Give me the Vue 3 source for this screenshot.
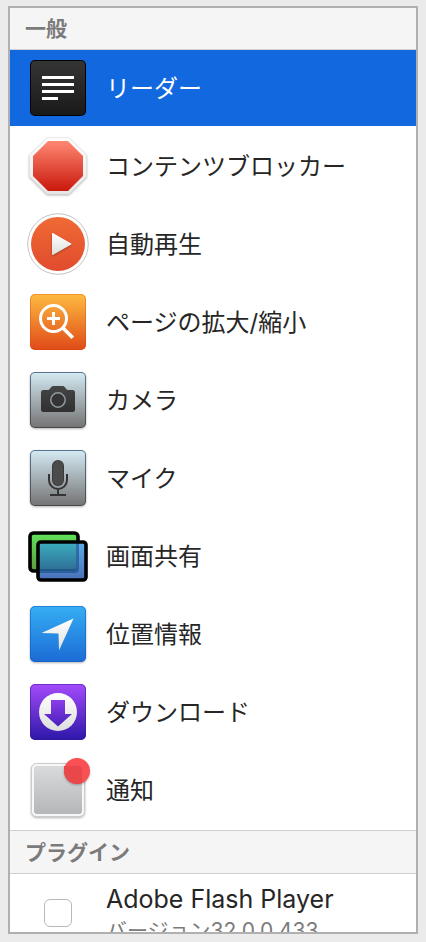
<template>
  <main class="preferences">
    <div class="site-list">
      <section>
        <h2 class="group-title">一般</h2>
        <ul class="items">
          <li v-for="item in items" :key="item.id">
            <button
              type="button"
              class="item"
              :class="{ selected: item.id === selected }"
              @click="selected = item.id"
            >
              <svg v-if="item.id === 'reader'" class="icon" viewBox="0 0 64 64" aria-hidden="true">
                <rect x="4" y="4" width="56" height="56" rx="5" fill="#000" />
                <rect x="5" y="5" width="54" height="54" rx="4" fill="url(#g-reader)" />
                <path d="M16 21.5h32M16 28.5h32M16 35.5h32M16 42.5h16" stroke="#fff" stroke-width="3" />
              </svg>

              <svg v-else-if="item.id === 'blocker'" class="icon" viewBox="0 0 64 64" aria-hidden="true">
                <path
                  class="shadow"
                  d="M21.5 4H43l17.5 17v21.5L43 60H21L3.5 42.5V21z"
                  fill="url(#g-rim)"
                  stroke="#e2e2e2"
                  stroke-width=".6"
                />
                <path d="M22 7h20l15 15v20L42 57H22L7 42V22z" fill="url(#g-red)" />
              </svg>

              <svg v-else-if="item.id === 'autoplay'" class="icon" viewBox="0 0 64 64" aria-hidden="true">
                <circle cx="32" cy="32" r="30.3" fill="#fff" stroke="#c4c4c4" />
                <circle cx="32" cy="32" r="27" fill="url(#g-play)" />
                <path class="shadow" d="M26 21.5v21a.5.5 0 0 0 .8.4l18.4-10.4a.5.5 0 0 0 0-.9L26.8 21a.5.5 0 0 0-.8.5z" fill="url(#g-white)" />
              </svg>

              <svg v-else-if="item.id === 'zoom'" class="icon" viewBox="0 0 64 64" aria-hidden="true">
                <rect x="4" y="4" width="56" height="56" rx="5" fill="url(#g-orange)" />
                <rect x="4.5" y="4.5" width="55" height="55" rx="4.5" fill="none" stroke="#d03a08" stroke-opacity=".3" />
                <circle cx="27.5" cy="28.5" r="13" fill="none" stroke="#fff" stroke-width="3" />
                <path d="M21 28.5h13M27.5 22v13" stroke="#fff" stroke-width="3" />
                <path d="M37 38l9.8 9.8" stroke="#fff" stroke-width="3.6" />
              </svg>

              <svg v-else-if="item.id === 'camera'" class="icon" viewBox="0 0 64 64" aria-hidden="true">
                <rect class="shadow" x="4" y="4" width="56" height="56" rx="5" fill="url(#g-edge)" />
                <rect x="5" y="5" width="54" height="54" rx="4" fill="url(#g-grey)" />
                <path
                  d="M17.5 22H22c2 0 3-4 5-4h10c2 0 3 4 5 4h4.5a2.5 2.5 0 0 1 2.5 2.5v17a2.5 2.5 0 0 1-2.5 2.5h-29a2.5 2.5 0 0 1-2.5-2.5v-17a2.5 2.5 0 0 1 2.5-2.5z"
                  fill="url(#g-dark)"
                />
                <circle cx="32" cy="32" r="7.2" fill="#343434" stroke="#909ba1" stroke-width="1.5" />
              </svg>

              <svg v-else-if="item.id === 'mic'" class="icon" viewBox="0 0 64 64" aria-hidden="true">
                <rect class="shadow" x="4" y="4" width="56" height="56" rx="5" fill="url(#g-edge)" />
                <rect x="5" y="5" width="54" height="54" rx="4" fill="url(#g-grey)" />
                <rect x="26" y="14" width="12" height="26" rx="6" fill="#3a3a3a" />
                <rect x="27" y="15" width="10" height="24" rx="5" fill="#4b4b4b" />
                <path d="M23 28v6a9 9 0 0 0 18 0v-6M32 43v6M24 49h16" fill="none" stroke="#343434" stroke-width="2" />
              </svg>

              <svg v-else-if="item.id === 'share'" class="icon" viewBox="0 0 64 64" aria-hidden="true">
                <rect x="4" y="9" width="48" height="38" rx="3.5" fill="url(#g-green)" stroke="#000" stroke-width="3.6" />
                <rect x="12" y="18" width="48" height="38" rx="3" fill="url(#g-screen)" />
                <path d="M12 18h38v27a2 2 0 0 1-2 2H12z" fill="url(#g-teal)" />
                <path d="M50 18h3v27a4 4 0 0 1-4 4H12v-4h36a2 2 0 0 0 2-2z" fill="#164b85" fill-opacity=".6" />
                <rect x="12" y="18" width="48" height="38" rx="3" fill="none" stroke="#000" stroke-width="3.6" />
              </svg>

              <svg v-else-if="item.id === 'location'" class="icon" viewBox="0 0 64 64" aria-hidden="true">
                <rect class="shadow" x="4" y="4" width="56" height="56" rx="5" fill="url(#g-blue)" />
                <rect x="4.5" y="4.5" width="55" height="55" rx="4.5" fill="none" stroke="#0e59b5" stroke-opacity=".5" />
                <path d="M47.5 16.5L15.5 31l17 .5.5 17z" fill="url(#g-white)" />
              </svg>

              <svg v-else-if="item.id === 'download'" class="icon" viewBox="0 0 64 64" aria-hidden="true">
                <rect x="4" y="4" width="56" height="56" rx="5" fill="url(#g-purple)" />
                <rect x="4.5" y="4.5" width="55" height="55" rx="4.5" fill="none" stroke="#391494" stroke-opacity=".5" />
                <circle cx="32" cy="32" r="19" fill="url(#g-white)" />
                <path d="M25 20h14v14h7L32 46.5 18 34h7z" fill="url(#g-arrow)" />
              </svg>

              <svg v-else class="icon" viewBox="0 0 64 64" aria-hidden="true">
                <rect class="shadow" x="5.5" y="5.5" width="53" height="53" rx="5" fill="#f7f7f7" stroke="#ccc" />
                <rect x="8" y="8" width="48" height="48" rx="3" fill="url(#g-tile)" />
                <circle class="shadow" cx="51" cy="13" r="13" fill="#fa5053" />
                <path d="M38 13V8h15a3 3 0 0 1 3 3v14a13 13 0 0 1-18-12z" fill="#e9484a" />
              </svg>

              <span class="item-label">{{ item.label }}</span>
            </button>
          </li>
        </ul>
      </section>

      <section>
        <h2 class="group-title plugins">プラグイン</h2>
        <div class="plugin">
          <input id="flash" v-model="flashEnabled" type="checkbox" class="check" />
          <label for="flash" class="plugin-text">
            <span class="plugin-name">Adobe Flash Player</span>
            <span class="plugin-version">バージョン32.0.0.433</span>
          </label>
        </div>
      </section>
    </div>

    <svg class="defs" aria-hidden="true">
      <defs>
        <linearGradient v-for="g in gradients" :id="'g-' + g.id" :key="g.id" x1="0" y1="0" x2="0" y2="1">
          <stop offset="0" :stop-color="g.from" />
          <stop offset="1" :stop-color="g.to" />
        </linearGradient>
      </defs>
    </svg>
  </main>
</template>

<script setup>
import { ref } from 'vue';

const selected = ref('reader');
const flashEnabled = ref(false);

const items = [
  { id: 'reader', label: 'リーダー' },
  { id: 'blocker', label: 'コンテンツブロッカー' },
  { id: 'autoplay', label: '自動再生' },
  { id: 'zoom', label: 'ページの拡大/縮小' },
  { id: 'camera', label: 'カメラ' },
  { id: 'mic', label: 'マイク' },
  { id: 'share', label: '画面共有' },
  { id: 'location', label: '位置情報' },
  { id: 'download', label: 'ダウンロード' },
  { id: 'notify', label: '通知' }
];

const gradients = [
  { id: 'reader', from: '#343434', to: '#191919' },
  { id: 'rim', from: '#ffffff', to: '#e6e6e6' },
  { id: 'red', from: '#ff8973', to: '#c9180c' },
  { id: 'play', from: '#f06a35', to: '#e04c2d' },
  { id: 'white', from: '#ffffff', to: '#dedede' },
  { id: 'orange', from: '#fdbb40', to: '#e04a18' },
  { id: 'edge', from: '#5b7590', to: '#484848' },
  { id: 'grey', from: '#d3e8f1', to: '#757575' },
  { id: 'dark', from: '#454545', to: '#303030' },
  { id: 'green', from: '#5fe35a', to: '#5c9a3c' },
  { id: 'screen', from: '#5aaee8', to: '#4a70b8' },
  { id: 'teal', from: '#3cafc0', to: '#2d6c94' },
  { id: 'blue', from: '#36aef4', to: '#1b6bd5' },
  { id: 'purple', from: '#a44bfb', to: '#2d17a8' },
  { id: 'arrow', from: '#8a3de8', to: '#4a20be' },
  { id: 'tile', from: '#d9dadb', to: '#b4b6b8' }
];
</script>

<style>
body {
  background: #ebebeb;
}
</style>

<style scoped>
.preferences {
  box-sizing: border-box;
  height: 100vh;
  padding: 6px 8px 8px;
  font-family: Inter, "Noto Sans CJK JP", sans-serif;
  color: #262626;
}

.site-list {
  box-sizing: border-box;
  height: 100%;
  border: 2px solid #b0b0b0;
  background: #fff;
  overflow: hidden;
}

.group-title {
  box-sizing: border-box;
  height: 42px;
  margin: 0;
  padding-left: 15px;
  border-bottom: 1px solid #d0d0d0;
  background: #f5f5f5;
  color: #7b7b7b;
  font-size: 21px;
  font-weight: 700;
  line-height: 42px;
}

.group-title.plugins {
  height: 44px;
  border-top: 1px solid #d0d0d0;
  line-height: 44px;
}

.items {
  display: flex;
  flex-direction: column;
  gap: 2px;
  margin: 0;
  padding: 0 0 2px;
  list-style: none;
}

.item {
  display: flex;
  align-items: center;
  gap: 16px;
  width: 100%;
  height: 76px;
  padding: 0 16px;
  border: none;
  background: none;
  color: inherit;
  font: inherit;
  font-size: 24px;
  line-height: 36px;
  text-align: left;
}

.item.selected {
  background: #1168df;
  color: #fff;
}

.item-label {
  padding-top: 2px;
}

.icon {
  flex: none;
  width: 64px;
  height: 64px;
  overflow: visible;
}

.shadow {
  filter: drop-shadow(0 1px 1px rgba(0, 0, 0, 0.3));
}

.plugin {
  display: flex;
  align-items: center;
  gap: 34px;
  height: 78px;
  padding: 0 34px;
}

.check {
  appearance: none;
  flex: none;
  width: 28px;
  height: 28px;
  margin: 0;
  border: 1px solid #b8b8b8;
  border-radius: 6px;
  background: #fff;
}

.check:checked {
  background: #1168df;
}

.plugin-text {
  display: flex;
  flex-direction: column;
  padding-top: 2px;
}

.plugin-name {
  font-size: 25px;
  line-height: 34px;
}

.plugin-version {
  color: #7b7b7b;
  font-size: 21px;
  line-height: 30px;
}

.defs {
  position: absolute;
  width: 0;
  height: 0;
}
</style>
